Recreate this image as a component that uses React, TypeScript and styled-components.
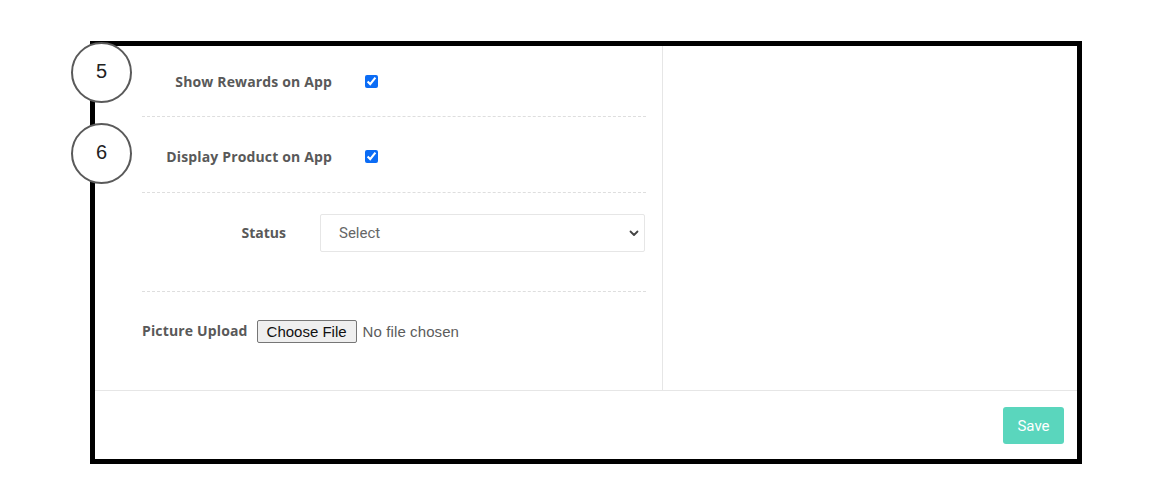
import React from "react";
import styled, { createGlobalStyle } from "styled-components";

const Global = createGlobalStyle`
  html, body { margin: 0; padding: 0; background: #fff; }
  body { font-family: "Open Sans", "Liberation Sans", sans-serif; }
  * { box-sizing: border-box; }
`;

const Page = styled.div`
  width: 1152px;
  height: 504px;
  padding: 41px 0 0 90px;
  background: #fff;
`;

const Frame = styled.div`
  position: relative;
  width: 992px;
  height: 423px;
  border: 5px solid #000;
  display: flex;
  flex-direction: column;
  background: #fff;
`;

const Body = styled.div`
  display: flex;
  height: 344px;
`;

const FormCol = styled.div`
  width: 567px;
  padding: 0 16px 0 47px;
  display: flex;
  flex-direction: column;
`;

const SideCol = styled.div`
  flex: 1;
  border-left: 1px solid #e6e6e6;
`;

const Row = styled.div<{ $h: number; $pt?: number; $align?: string; $dashed?: boolean }>`
  height: ${(p) => p.$h}px;
  padding-top: ${(p) => p.$pt ?? 0}px;
  display: flex;
  align-items: ${(p) => p.$align ?? "center"};
  border-bottom: ${(p) => (p.$dashed ? "1px dashed #dedede" : "none")};
`;

const Label = styled.label<{ $w?: number; $right?: boolean; $mt?: number; $ls?: number }>`
  width: ${(p) => (p.$w ? `${p.$w}px` : "auto")};
  text-align: ${(p) => (p.$right ? "right" : "left")};
  margin-top: ${(p) => p.$mt ?? 0}px;
  letter-spacing: ${(p) => p.$ls ?? 0}px;
  font-family: "Open Sans", "Liberation Sans", sans-serif;
  font-weight: 700;
  font-size: 14px;
  color: #595959;
  flex-shrink: 0;
`;

const Check = styled.input.attrs({ type: "checkbox" })<{ $ml: number }>`
  width: 13px;
  height: 13px;
  margin: 0 0 0 ${(p) => p.$ml}px;
  accent-color: #0b6cf5;
`;

const SelectWrap = styled.div`
  position: relative;
  margin-left: 34px;
  width: 325px;
  height: 38px;
`;

const Select = styled.select`
  appearance: none;
  width: 100%;
  height: 100%;
  border: 1px solid #e6e6e6;
  border-radius: 2px;
  background: #fff;
  padding: 0 0 0 18px;
  font-family: Roboto, "Liberation Sans", sans-serif;
  font-size: 15px;
  color: #666;
  outline: none;
`;

const Chevron = styled.svg`
  position: absolute;
  right: 6px;
  top: 16px;
  pointer-events: none;
`;

const FileLabel = styled.label`
  margin-left: 9px;
  display: flex;
  align-items: center;
  font-family: "Liberation Sans", Arial, sans-serif;
  font-size: 15px;
`;

const FileButton = styled.span`
  width: 100px;
  height: 23px;
  display: flex;
  align-items: center;
  justify-content: center;
  border: 1px solid #767676;
  border-radius: 2px;
  background: #efefef;
  color: #111;
`;

const FileText = styled.span`
  margin-left: 6px;
  color: #5c5c5c;
  letter-spacing: 0.1px;
`;

const HiddenInput = styled.input`
  display: none;
`;

const Footer = styled.div`
  flex: 1;
  border-top: 1px solid #e6e6e6;
  display: flex;
  justify-content: flex-end;
  align-items: flex-start;
  padding: 16px 13px 0 0;
`;

const SaveButton = styled.button`
  width: 61px;
  height: 37px;
  border: none;
  border-radius: 3px;
  background: #5ad6bd;
  color: #fff;
  font-family: Roboto, "Liberation Sans", sans-serif;
  font-size: 15px;
  padding: 0;
`;

const Marker = styled.div<{ $top: number }>`
  position: absolute;
  left: -24px;
  top: ${(p) => p.$top}px;
  width: 61px;
  height: 61px;
  border-radius: 50%;
  border: 2px solid #5a5a5a;
  background: #fff;
  display: flex;
  align-items: center;
  justify-content: center;
  padding-bottom: 2px;
  font-family: "Liberation Sans", Arial, sans-serif;
  font-size: 20px;
  color: #222;
`;

export default function App() {
  return (
    <>
      <Global />
      <Page>
        <Frame>
          <Body>
            <FormCol>
              <Row $h={71} $dashed>
                <Label $w={190} $right $ls={0.15}>Show Rewards on App</Label>
                <Check $ml={33} defaultChecked />
              </Row>
              <Row $h={76} $pt={4} $dashed>
                <Label $w={190} $right $ls={0.15}>Display Product on App</Label>
                <Check $ml={33} defaultChecked />
              </Row>
              <Row $h={99} $pt={21} $align="flex-start" $dashed>
                <Label $w={144} $right $mt={9}>Status</Label>
                <SelectWrap>
                  <Select defaultValue="">
                    <option value="">Select</option>
                    <option value="active">Active</option>
                    <option value="inactive">Inactive</option>
                  </Select>
                  <Chevron width="10" height="7" viewBox="0 0 10 7">
                    <path d="M1.5 1.5 L5 5 L8.5 1.5" fill="none" stroke="#444" strokeWidth="1.8" strokeLinecap="round" strokeLinejoin="round" />
                  </Chevron>
                </SelectWrap>
              </Row>
              <Row $h={98} $pt={28} $align="flex-start">
                <Label $mt={1} $ls={0.15}>Picture Upload</Label>
                <FileLabel>
                  <HiddenInput type="file" />
                  <FileButton>Choose File</FileButton>
                  <FileText>No file chosen</FileText>
                </FileLabel>
              </Row>
            </FormCol>
            <SideCol />
          </Body>
          <Footer>
            <SaveButton>Save</SaveButton>
          </Footer>
          <Marker $top={-4}>5</Marker>
          <Marker $top={77}>6</Marker>
        </Frame>
      </Page>
    </>
  );
}
